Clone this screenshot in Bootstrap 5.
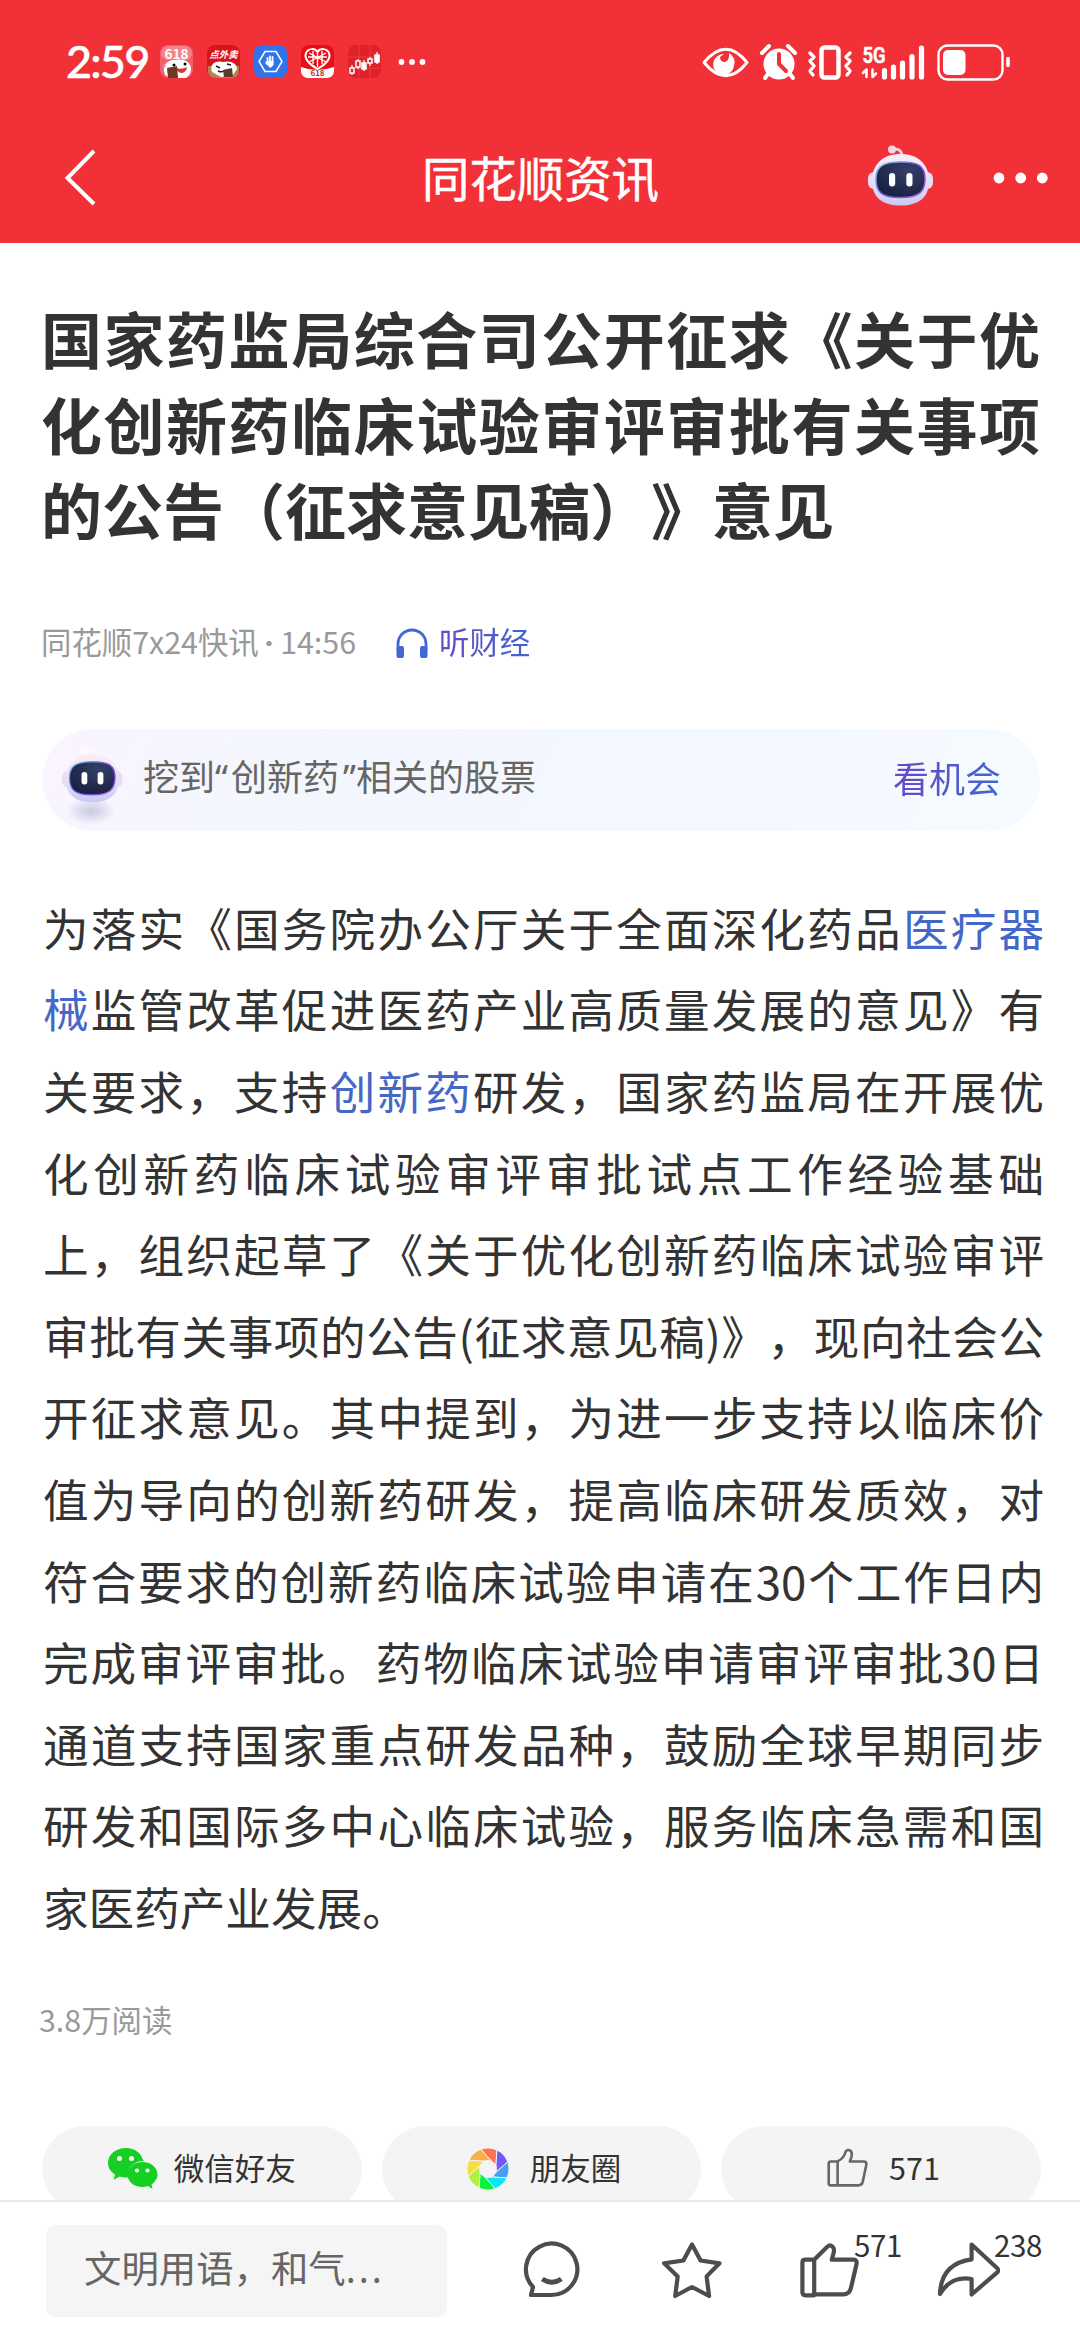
<!DOCTYPE html>
<html lang="zh-CN">
<head>
<meta charset="utf-8">
<meta name="viewport" content="width=device-width, initial-scale=1">
<title>同花顺资讯</title>
<link rel="stylesheet" href="https://cdn.jsdelivr.net/npm/bootstrap@5.3.0/dist/css/bootstrap.min.css">
<style>
  body { font-family: "Noto Sans CJK SC", "Noto Sans", sans-serif; color: #333; text-spacing-trim: space-all; }
  .screen { width: 1080px; height: 2340px; }
  .top-red { background: #f23038; height: 243px; color: #fff; }
  .status-row { height: 122px; padding: 1px 70px 0 66px; }
  .clock { font: 500 45px/1 Lato, "Noto Sans", sans-serif; letter-spacing: -1.8px; width: 94px; white-space: nowrap; -webkit-text-stroke: .5px #fff; }
  .title-row { height: 121px; padding: 0 31px 0 60px; }
  .side { width: 240px; }
  .side-back { width: 212px; }
  .side-back svg { margin-top: -9px; }
  .robot { margin: -13px 1px 0 0; }
  .more { margin-top: -9px; }
  .title-row h1 { font-size: 47.4px; line-height: 60px; font-weight: 400; padding-bottom: 12px; -webkit-text-stroke: .5px #fff; }
  svg { display: block; flex: none; }
  .page-main { padding: 52px 38px 0 42px; min-height: 0; }
  .headline { font-size: 61px; line-height: 85.6px; font-weight: 700; width: 999px; margin-left: -1px !important; white-space: nowrap; }
  .just { display: block; text-align: justify; text-align-last: justify; }
  .meta-row { margin-top: 71px; height: 40px; font-size: 30.4px; line-height: 40px; color: #999; }
  .meta-row svg { margin: 2px 11px 0 40px; }
  .source { margin: -4px 0 0 -1px; width: 315px; white-space: nowrap; }
  .source b { font: 700 30px/1 "Noto Sans", sans-serif; margin: 0 7px 0 6px; }
  .listen, .chance { background: linear-gradient(100deg, #6a48c4, #3f67d2); -webkit-background-clip: text; background-clip: text; color: transparent; margin-top: -4px; }
  .banner { margin-top: 66px; width: 998px; height: 102px; border-radius: 51px; padding: 0 39px 0 18px; font-size: 36px; line-height: 48px; color: #666;
    background: linear-gradient(115deg, #faf4fe 0%, #f5f6fe 18%, #f3f7ff 50%, #f6fbff 100%); }
  .banner .chance { margin-top: -6px; }
  .tip { margin: -6px 0 0 19px; }
  .lq { font-family: "Noto Sans", sans-serif; letter-spacing: 3px; }
  .rq { font-family: "Noto Sans", sans-serif; padding-left: 4px; }
  .story { margin: 56px 0 0 1px; width: 1001px; font-size: 45.6px; line-height: 81.6px; white-space: nowrap; }
  .story a { color: #4468c8; text-decoration: none; }
  .reads { margin: 51px 0 0 -3px; font-size: 30.4px; line-height: 40px; color: #999; }
  .shares { margin-top: 87px; gap: 20px; width: 999px; }
  .share-btn { flex: 0 0 319.6px; height: 86px; border-radius: 43px; background: #f4f4f4; font-size: 30.5px; line-height: 40px; color: #333; }
  .share-btn span { padding-bottom: 3px; }
  .bottom { height: 140px; border-top: 2px solid #e8e8e8; background: #fff; padding: 0 40px 0 46px; }
  .say { width: 401px; height: 92px; border-radius: 10px; background: #f5f5f5; color: #666; font-size: 37.4px; line-height: 50px; padding: 0 0 6px 38px; }
  .say i { font-family: "Noto Sans", sans-serif; font-style: normal; letter-spacing: 3px; }
  .acts { padding: 0 40px 0 75px; }
  .act { width: 64px; height: 64px; margin-top: -1px; }
  .cnt { position: absolute; top: -15px; font-size: 29.5px; line-height: 40px; letter-spacing: -.4px; }
  .cnt-like { left: 56px; }
  .cnt-share { left: 58px; }
</style>
</head>
<body>
<svg width="0" height="0" class="position-absolute">
  <defs>
    <linearGradient id="shell" x1="0" y1="0" x2="0" y2="1"><stop offset="0" stop-color="#fbeef6"/><stop offset=".6" stop-color="#e4ddf6"/><stop offset="1" stop-color="#c9c9f4"/></linearGradient>
    <linearGradient id="rim" x1="0" y1="0" x2="1" y2="1"><stop offset="0" stop-color="#7bd6ee"/><stop offset=".5" stop-color="#6b4bd8"/><stop offset="1" stop-color="#a45ae0"/></linearGradient>
    <radialGradient id="visor" cx=".65" cy=".25" r=".8"><stop offset="0" stop-color="#35406a"/><stop offset="1" stop-color="#18203f"/></radialGradient>
    <radialGradient id="shade"><stop offset="0" stop-color="#c9c9e2"/><stop offset="1" stop-color="#c9c9e2" stop-opacity="0"/></radialGradient>
    <g id="bot">
      <path d="M25 4q9-1 9 8" fill="none" stroke="#f7cfdc" stroke-width="3"/>
      <circle cx="24" cy="4.500" r="4" fill="#f9d3de"/>
      <rect x="0" y="27" width="12" height="17" rx="6" fill="#e6dcf4"/><rect x="53" y="27" width="12" height="17" rx="6" fill="#e6dcf4"/>
      <path d="M32.500 9C50 9 61 19 61 36S50 60.500 32.500 60.500 4 53 4 36 15 9 32.500 9Z" fill="url(#shell)"/>
      <path d="M32.500 17C50 17 57 21 57 34S51 52.500 32.500 52.500 8 47 8 34 15 17 32.500 17Z" fill="url(#visor)" stroke="url(#rim)" stroke-width="1.500"/>
      <rect x="21" y="28" width="6.200" height="13.500" rx="3" fill="#fff"/><rect x="38.300" y="28" width="6.200" height="13.500" rx="3" fill="#fff"/>
    </g>
  </defs>
</svg>
<div class="screen d-flex flex-column overflow-hidden bg-white">
  <header class="top-red flex-shrink-0">
    <div class="status-row d-flex align-items-center justify-content-between">
      <div class="d-flex align-items-center">
        <span class="clock">2:59</span>
        <svg width="266" height="34" viewBox="0 0 266 34">
          <rect width="33" height="33" rx="8" fill="#f0606a"/><rect x="1" y="1" width="31" height="14" rx="7" fill="#f4838a"/>
          <text x="16.500" y="13.500" font-size="13.500" font-weight="700" fill="#fff" text-anchor="middle">618</text>
          <path d="M5 30C1 20 8 14 16 15c6-2 15 1 15 9 0 4-2 7-5 9H10Z" fill="#fff"/><path d="M16 23q6 2 11-1-1 6-6 6-4-1-5-5Z" fill="#d8352f"/><circle cx="14" cy="20" r="1.500"/><circle cx="25" cy="19" r="1.500"/><path d="M7 23l10-2 1 12H8Z" fill="#6b3a23"/><path d="M3 18l3 3-3 3Z" fill="#f7a"/>
          <g transform="translate(47)"><rect width="33" height="33" rx="8" fill="#d9141b"/><path d="M1 21h31v5a7 7 0 0 1-7 7H8a7 7 0 0 1-7-7Z" fill="#b9814f"/>
          <text x="16.500" y="13" font-size="9.500" font-weight="700" font-style="italic" fill="#fff" text-anchor="middle">点外卖</text><path d="M5 27C2 19 9 15 16 17c7-2 14 1 14 7l-4 6-12 2Z" fill="#fff"/><path d="M9 21l4 2M20 19l4 1M11 26q4 2 7-1" stroke="#222" stroke-width="1.500" fill="none"/><path d="M16 25l9-2 1 9h-9Z" fill="#5f3927"/></g>
          <g transform="translate(94)"><rect width="33" height="33" rx="8" fill="#2f74ea"/><path d="M11 6.500h11l6 10-6 10H11l-6-10Z" fill="none" stroke="#fff" stroke-width="1.500"/><path d="M13.500 18v-5M16 18v-6.500M18.500 18v-6M12 17.500l1.500 2" fill="none" stroke="#fff" stroke-width="1.800" stroke-linecap="round"/><path d="M12.600 16h6.900v4l-2.500 2.500h-2Z" fill="#fff"/></g>
          <g transform="translate(141)"><rect width="33" height="33" rx="8" fill="#e60f17"/><path d="M0 22q16 6 33 0v4a7 7 0 0 1-7 7H7a7 7 0 0 1-7-7Z" fill="#fff"/><path d="M16.500 24C8 19 3 13 5 8s9-5 11.500-1C19 3 26 3 28 8s-3 11-11.500 16Z" fill="none" stroke="#fff" stroke-width="2"/><path d="M8 8l17 9M25 8L8 17M12 6v13M21 6v13M7 12h19M16.500 8v14" stroke="#fff" stroke-width="1.300" fill="none"/>
          <text x="16.500" y="31" font-size="8" font-weight="700" fill="#b32" text-anchor="middle">618</text></g>
          <g transform="translate(188)"><rect width="33" height="33" rx="8" fill="#df2229"/><path d="M0 12h33M0 23h33M11 0v33M22 0v33" stroke="#e8454a" stroke-width=".7"/><path d="M4 20v10M10 14v10M16 15v11M22 12v9M29 7v12" stroke="#fff" stroke-width="1.300"/><g fill="#df2229" stroke="#fff" stroke-width="1.500"><rect x="2" y="23" width="4" height="5"/><rect x="8" y="16" width="4" height="6"/><rect x="14" y="18" width="4" height="6" fill="#fff"/><rect x="20" y="14" width="4" height="4"/><rect x="27" y="10" width="4" height="7" fill="#fff"/></g></g>
          <g fill="#fff"><circle cx="241.500" cy="17" r="2.900"/><circle cx="252" cy="17" r="2.900"/><circle cx="262.500" cy="17" r="2.900"/></g>
        </svg>
      </div>
      <svg width="308" height="38" viewBox="0 0 308 38" fill="none" stroke="#fff" stroke-width="3" stroke-linecap="round" stroke-linejoin="round">
        <path d="M2 19.500Q24-7 45 19.500 24 46 2 19.500Z"/><path d="M22 11a10.500 10.500 0 1 0 10 12A10.500 10.500 0 0 0 27 10q1 7-4 9-5 0-5-5Z" fill="#fff" stroke="none"/>
        <g transform="translate(59 1)"><circle cx="18" cy="20" r="15.500" fill="#fff" stroke="none"/><path d="M18 10v10l7 7" stroke="#f23038" stroke-width="4"/><path d="M1 9l7-7M34 9l-7-7" stroke-width="4"/><path d="M7 30l-3 4M29 30l3 4" stroke-width="4"/></g>
        <rect x="119.500" y="4.500" width="17" height="30" rx="3" stroke-width="4.500"/><path d="M108 10l4 4-4 4 4 5-4 5 3 4M148 10l-4 4 4 4-4 5 4 5-3 4" stroke-width="3.400"/>
        <text x="160.500" y="19.500" font-size="21.500" font-weight="500" textLength="23" lengthAdjust="spacingAndGlyphs" fill="#fff" stroke="#fff" stroke-width=".7" font-family="Roboto, sans-serif">5G</text>
        <path d="M161 30l3.500-3.500V34M170.500 26.500V34l3.500-3.500" stroke-width="2.500"/>
        <path d="M182.500 27.500v6.500M191.500 24v10M200.500 20v14M210 13.500V34M219.500 5v29" stroke-width="5.200"/>
        <rect x="236.500" y="2.500" width="64" height="34" rx="9" stroke-width="2.400"/><rect x="241" y="7" width="22.500" height="25" rx="5" fill="#fff" stroke="none"/><path d="M306 15.500v7" stroke-width="3.600"/>
      </svg>
    </div>
    <div class="title-row d-flex align-items-center justify-content-between">
      <div class="side-back"><svg width="40" height="60" viewBox="0 0 40 60"><path d="M34 3L7.500 30 34 56" fill="none" stroke="#fff" stroke-width="4"/></svg></div>
      <h1 class="m-0">同花顺资讯</h1>
      <div class="side d-flex align-items-center">
        <svg width="65" height="62" viewBox="0 0 65 62" class="robot ms-auto"><use href="#bot"/></svg>
        <svg width="56" height="14" viewBox="0 0 56 14" fill="#fff" class="more ms-auto"><circle cx="6" cy="7" r="5.400"/><circle cx="27.700" cy="7" r="5.400"/><circle cx="49.300" cy="7" r="5.400"/></svg>
      </div>
    </div>
  </header>

  <main class="page-main flex-grow-1 overflow-hidden">
    <h2 class="headline m-0">
      <span class="just">国家药监局综合司公开征求《关于优</span>
      <span class="just">化创新药临床试验审评审批有关事项</span>
      <span class="d-block">的公告（征求意见稿）》意见</span>
    </h2>
    <div class="meta-row d-flex align-items-center">
      <span class="source">同花顺7x24快讯<b>·</b>14:56</span>
      <svg width="32" height="32" viewBox="0 0 32 32"><path d="M2 22V16a14 14 0 0 1 28 0v6" fill="none" stroke="#4268d2" stroke-width="2.800"/><rect x=".5" y="18" width="7.500" height="12" rx="2" fill="#4268d2"/><rect x="24" y="18" width="7.500" height="12" rx="2" fill="#4268d2"/></svg>
      <span class="listen">听财经</span>
    </div>
    <div class="banner d-flex align-items-center">
      <svg width="64" height="90" viewBox="0 0 64 90"><ellipse cx="31" cy="76" rx="25" ry="14" fill="url(#shade)"/><g transform="translate(2 11) scale(.93)"><use href="#bot"/><circle cx="24" cy="4.500" r="5" fill="#fdfaff"/><path d="M26 4q8 0 8 5" fill="none" stroke="#fdfaff" stroke-width="4"/></g></svg>
      <span class="tip">挖到<span class="lq">“</span>创新药<span class="rq">”</span>相关的股票</span>
      <span class="chance ms-auto">看机会</span>
    </div>
    <article class="story">
      <span class="just">为落实《国务院办公厅关于全面深化药品<a href="#">医疗器</a></span>
      <span class="just"><a href="#">械</a>监管改革促进医药产业高质量发展的意见》有</span>
      <span class="just">关要求，支持<a href="#">创新药</a>研发，国家药监局在开展优</span>
      <span class="just">化创新药临床试验审评审批试点工作经验基础</span>
      <span class="just">上，组织起草了《关于优化创新药临床试验审评</span>
      <span class="just">审批有关事项的公告(征求意见稿)》，现向社会公</span>
      <span class="just">开征求意见。其中提到，为进一步支持以临床价</span>
      <span class="just">值为导向的创新药研发，提高临床研发质效，对</span>
      <span class="just">符合要求的创新药临床试验申请在30个工作日内</span>
      <span class="just">完成审评审批。药物临床试验申请审评审批30日</span>
      <span class="just">通道支持国家重点研发品种，鼓励全球早期同步</span>
      <span class="just">研发和国际多中心临床试验，服务临床急需和国</span>
      <span class="d-block">家医药产业发展。</span>
    </article>
    <div class="reads">3.8万阅读</div>
    <div class="shares d-flex">
      <div class="share-btn d-flex align-items-center justify-content-center gap-3">
        <svg width="50" height="42" viewBox="0 0 50 42"><path d="M18 0C8 0 0 6.500 0 15c0 5 3 9 7 11.500L5.500 32l6-3.500q5 1.500 9 .8C18 20 26 13 35.500 13 33 5 27 0 18 0Z" fill="#14d022"/><path d="M34.500 14C26 14 19.500 19.500 19.500 26.500S26 39 34.500 39q3 0 5.500-1l4.500 3-1-4.500c3.500-2.500 6-6 6-10C49.500 19.500 43 14 34.500 14Z" fill="#14d022"/><g fill="#fff"><circle cx="11.500" cy="10.500" r="2.500"/><circle cx="23.500" cy="10.500" r="2.500"/><circle cx="29" cy="22.500" r="2.100"/><circle cx="39.500" cy="22.500" r="2.100"/></g></svg>
        <span>微信好友</span>
      </div>
      <div class="share-btn d-flex align-items-center justify-content-center gap-3 ps-1">
        <svg width="44" height="44" viewBox="-22 -22 44 44" class="me-1" id="lens"></svg>
        <span>朋友圈</span>
      </div>
      <div class="share-btn d-flex align-items-center justify-content-center gap-3 ps-1">
        <svg width="43" height="41" viewBox="0 0 63 60" fill="none" stroke="#666" stroke-width="3.800" stroke-linejoin="round" class="me-1"><path d="M17 19.700H7q-3 0-3 3v29q0 3 3 3h10ZM17 19.700Q27 14 28.500 6 31 1 36 4q3 3 1 10l-2 5.700h20q5 0 4 5l-5 24q-1 6-7 6H17"/></svg>
        <span>571</span>
      </div>
    </div>
  </main>

  <footer class="bottom flex-shrink-0 d-flex align-items-center">
    <div class="say d-flex align-items-center"><span>文明用语，和气<i>...</i></span></div>
    <div class="acts flex-grow-1 d-flex justify-content-between">
      <div class="act position-relative"><svg width="64" height="64" viewBox="0 0 64 64" fill="none" stroke="#4d4d4d" stroke-width="4.200" stroke-linejoin="round"><path d="M29.600 56A25.700 25.700 0 1 0 11 48L9 56Z"/><path d="M20.300 40q9.500 6.500 19 0" stroke-width="5"/></svg></div>
      <div class="act position-relative"><svg width="64" height="64" viewBox="0 0 64 64" fill="none" stroke="#4d4d4d" stroke-width="4.200" stroke-linejoin="round"><path d="M32 5.500L40.600 21.500 59.500 24.300 46.600 37.400 49.100 57 32 48 15.200 57 17.700 37.400 4.100 24.300 23.400 21.500Z"/></svg></div>
      <div class="act position-relative"><svg width="64" height="64" viewBox="0 0 64 64" fill="none" stroke="#4d4d4d" stroke-width="4.200" stroke-linejoin="round"><path d="M16.200 20.700H7.400q-3 0-3 3v29.600q0 3 3 3h8.800ZM16.200 20.700L29 8q4-3.500 6.500 1 .8 1.500.2 4.500l-1.900 7.200h21.700q4 0 3 4.500l-5.500 23.600q-1.500 6.500-7 6.500H16.200"/></svg><span class="cnt cnt-like">571</span></div>
      <div class="act position-relative"><svg width="64" height="64" viewBox="0 0 64 64" fill="none" stroke="#4d4d4d" stroke-width="4.200" stroke-linejoin="round"><path d="M35.600 5.500L61.500 29.500q1.500 1.800 0 3.600L35.600 55.500V40Q15 36.500 4 55 5 24.500 35.600 20.300Z"/></svg><span class="cnt cnt-share">238</span></div>
    </div>
  </footer>
</div>
<script>
  // Eight-bladed aperture: each blade leans along the next spoke.
  const hues = ['#fb7455', '#7457fb', '#489df6', '#08e5f5', '#0bf23c', '#aef23c', '#f5df3b', '#f7b04b'];
  const at = (deg, r) => [r * Math.cos(deg * Math.PI / 180), r * Math.sin(deg * Math.PI / 180)].map(v => v.toFixed(2)).join(' ');
  document.getElementById('lens').innerHTML = hues.map((c, i) => {
    const a = -110 + i * 45;
    return `<path d="M${at(a, 21)}A21 21 0 0 1 ${at(a + 45, 21)}L${at(a + 83, 9)}L${at(a + 38, 9)}Z" fill="${c}" stroke="#f4f4f4" stroke-width="1"/>`;
  }).join('') + '<circle r="7.800" fill="#f4f4f4"/>';
</script>
<script src="https://cdn.jsdelivr.net/npm/bootstrap@5.3.0/dist/js/bootstrap.bundle.min.js"></script>
</body>
</html>
